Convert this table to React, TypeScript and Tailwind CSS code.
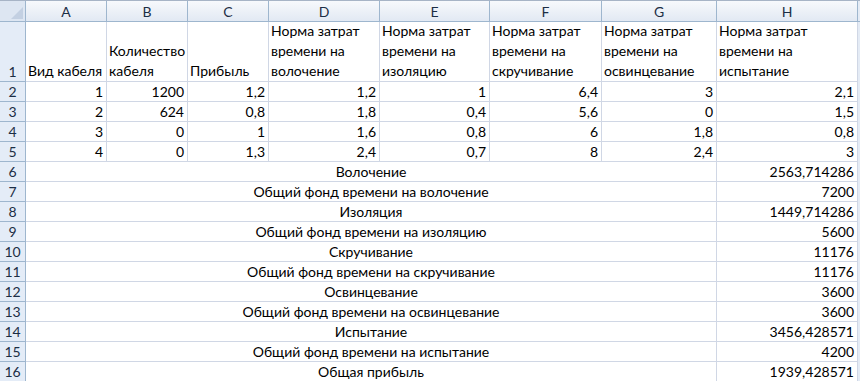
import React from "react";

const cols = [
  { l: "A", w: 81 },
  { l: "B", w: 81 },
  { l: "C", w: 81 },
  { l: "D", w: 111 },
  { l: "E", w: 110 },
  { l: "F", w: 112 },
  { l: "G", w: 115 },
  { l: "H", w: 141 },
];

const header1Lines: string[][] = [
  ["Вид кабеля"],
  ["Количество", "кабеля"],
  ["Прибыль"],
  ["Норма затрат", "времени на", "волочение"],
  ["Норма затрат", "времени на", "изоляцию"],
  ["Норма затрат", "времени на", "скручивание"],
  ["Норма затрат", "времени на", "освинцевание"],
  ["Норма затрат", "времени на", "испытание"],
];

const data = [
  ["1", "1200", "1,2", "1,2", "1", "6,4", "3", "2,1"],
  ["2", "624", "0,8", "1,8", "0,4", "5,6", "0", "1,5"],
  ["3", "0", "1", "1,6", "0,8", "6", "1,8", "0,8"],
  ["4", "0", "1,3", "2,4", "0,7", "8", "2,4", "3"],
];

const summary = [
  ["Волочение", "2563,714286"],
  ["Общий фонд времени на волочение", "7200"],
  ["Изоляция", "1449,714286"],
  ["Общий фонд времени на изоляцию", "5600"],
  ["Скручивание", "11176"],
  ["Общий фонд времени на скручивание", "11176"],
  ["Освинцевание", "3600"],
  ["Общий фонд времени на освинцевание", "3600"],
  ["Испытание", "3456,428571"],
  ["Общий фонд времени на испытание", "4200"],
  ["Общая прибыль", "1939,428571"],
];

const grid = "26px 81px 81px 81px 111px 110px 112px 115px 141px 3px";

function RowHdr({ n, h }: { n: number; h: string }) {
  return (
    <div
      className={`flex items-end justify-center border-r border-b border-[#9eb6ce] bg-[#e4ecf7] text-[#1c2e45] ${h}`}
    >
      <span className="leading-[19px]">{n}</span>
    </div>
  );
}

export default function App() {
  void cols;
  return (
    <div
      className="w-[860px] h-[381px] overflow-hidden bg-white text-[14px] text-black"
      style={{ fontFamily: "Lato, 'Open Sans', sans-serif" }}
    >
      <div className="h-[1px] bg-[#a7b4c6]" />
      <div className="grid" style={{ gridTemplateColumns: grid }}>
        {/* column header row */}
        <div className="relative h-[21px] border-r border-b border-[#9eb6ce] bg-[#dde6f2]">
          <svg className="absolute right-[2px] bottom-[2px]" width="12" height="12" viewBox="0 0 12 12">
            <polygon points="12,0 12,12 0,12" fill="#c3d0e2" />
          </svg>
        </div>
        {cols.map((c) => (
          <div
            key={c.l}
            className="flex h-[21px] items-center justify-center border-r border-b border-[#9eb6ce] bg-gradient-to-b from-[#f7f9fc] to-[#e2e9f3] text-[#1c2e45]"
          >
            {c.l}
          </div>
        ))}
        <div className="h-[21px] border-b border-[#9eb6ce] bg-[#e4ebf5]" />

        {/* row 1 */}
        <RowHdr n={1} h="h-[60px]" />
        {header1Lines.map((lines, i) => (
          <div
            key={i}
            className="flex h-[60px] flex-col justify-end border-r border-b border-[#d0d7e5] pl-[2px] pr-[2px] whitespace-nowrap overflow-hidden"
          >
            {lines.map((t, j) => (
              <div key={j} className="leading-[20px]">
                {t}
              </div>
            ))}
          </div>
        ))}
        <div className="h-[60px] bg-[#e4ebf5]" />

        {/* data rows */}
        {data.map((row, r) => (
          <React.Fragment key={r}>
            <RowHdr n={r + 2} h="h-[20px]" />
            {row.map((v, i) => (
              <div
                key={i}
                className="flex h-[20px] items-end justify-end border-r border-b border-[#d0d7e5] pr-[3px] leading-[19px]"
              >
                {v}
              </div>
            ))}
            <div className="h-[20px] bg-[#e4ebf5]" />
          </React.Fragment>
        ))}

        {/* summary rows */}
        {summary.map(([label, val], r) => (
          <React.Fragment key={r}>
            <RowHdr n={r + 6} h="h-[20px]" />
            <div className="col-span-7 flex h-[20px] items-end justify-center border-r border-b border-[#d0d7e5] leading-[19px]">
              {label}
            </div>
            <div className="flex h-[20px] items-end justify-end border-r border-b border-[#d0d7e5] pr-[3px] leading-[19px]">
              {val}
            </div>
            <div className="h-[20px] bg-[#e4ebf5]" />
          </React.Fragment>
        ))}
      </div>
    </div>
  );
}
